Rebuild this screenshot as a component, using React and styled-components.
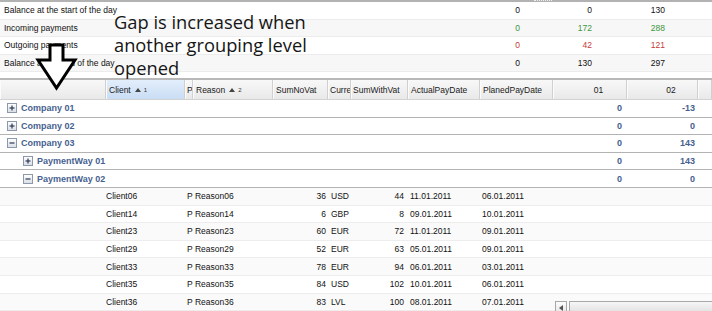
import React from "react"
import styled, { createGlobalStyle } from "styled-components"

const Global = createGlobalStyle`
body{
  margin:0;
  background:#fff;
  font-family:"Liberation Sans", Arial, sans-serif;
}
`

const COLS = "106px 79px 8px 80px 55px 23px 57px 72px 73px 74px 71px 1fr"

const Page = styled.div`
position:relative;
width:712px;
height:311px;
overflow:hidden;
background:#fff;
`

const Summary = styled.div`
height:76px;
border-top:2px solid #b2b2b2;
border-bottom:2px solid #b8b8b8;
`

const SplitHandle = styled.div`
position:absolute;
left:534px;
top:0;
width:18px;
height:2px;
border-top:1px dotted #eee;
`

const SummaryRow = styled.div`
display:grid;
grid-template-columns:1fr 72px 72px 73px 47px;
align-items:center;
height:17.6px;
border-bottom:1px solid #ececec;
box-sizing:border-box;
background:${({ $alt }) => ($alt ? "#f7f7f7" : "#fff")};
font-size:8.5px;
color:#111;
`

const SumLabel = styled.span`
padding-left:4px;
white-space:nowrap;
`

const SumValue = styled.span`
text-align:right;
color:${({ $tone }) => ($tone === "in" ? "#3d963d" : $tone === "out" ? "#c73a3a" : "#111")};
`

const GridPanel = styled.div`
position:relative;
`

const HeaderRow = styled.div`
display:grid;
grid-template-columns:${COLS};
height:20px;
background:linear-gradient(#f8f8f8, #e9e9e9);
border-bottom:1px solid #d2d2d2;
box-sizing:border-box;
font-size:8.5px;
color:#1a1a1a;
`

const HeaderCell = styled.div`
display:flex;
align-items:center;
gap:4px;
justify-content:${({ $center }) => ($center ? "center" : "flex-start")};
padding-left:${({ $center, $tight }) => ($center ? "18px" : $tight ? "2px" : "3px")};
border-right:1px solid #d0d0d0;
box-shadow:inset 1px 0 #fbfbfb;
overflow:hidden;
white-space:nowrap;
background:${({ $sorted }) => ($sorted ? "linear-gradient(#e3eefb, #c9ddf4)" : "transparent")};
`

const SortMark = styled.span`
display:inline-flex;
align-items:center;
gap:3px;
font-size:6px;
color:#333;
`

const GroupRow = styled.div`
display:grid;
grid-template-columns:${COLS};
align-items:center;
height:17.6px;
box-sizing:border-box;
border-bottom:1px solid #b3b3b3;
background:#fff;
font-size:9px;
font-weight:bold;
color:#46618f;
`

const GroupTitle = styled.div`
grid-column:1 / 10;
display:flex;
align-items:center;
gap:4px;
padding-left:${({ $level }) => 7 + $level * 16}px;
white-space:nowrap;
`

const GroupValue = styled.span`
text-align:right;
padding-right:${({ $pad }) => $pad}px;
`

const Nested = styled.div`
box-shadow:inset 1px 0 #a9a9a9;
`

const DataRow = styled.div`
display:grid;
grid-template-columns:${COLS};
align-items:center;
height:17.6px;
box-sizing:border-box;
border-bottom:1px solid #ededed;
background:${({ $alt }) => ($alt ? "#fafafa" : "#fff")};
font-size:8.5px;
color:#111;
`

const Cell = styled.span`
grid-column:${({ $col }) => $col};
text-align:${({ $right }) => ($right ? "right" : "left")};
padding-left:${({ $pl }) => $pl || 0}px;
padding-right:${({ $pr }) => $pr || 0}px;
white-space:nowrap;
`

const HScroll = styled.div`
position:absolute;
left:555px;
top:221px;
right:0;
height:12px;
display:flex;
`

const ScrollButton = styled.div`
width:10px;
height:11px;
border:1px solid #a8a8a8;
background:linear-gradient(#fdfdfd, #e4e4e4);
display:flex;
align-items:center;
justify-content:center;
`

const ScrollTrack = styled.div`
flex:1;
margin-left:2px;
border:1px solid #a8a8a8;
border-right:none;
background:linear-gradient(#f6f6f6, #e2e2e2);
`

const Note = styled.div`
position:absolute;
left:114px;
top:10px;
font-family:"Open Sans", sans-serif;
font-size:18.3px;
line-height:23px;
color:#151515;
white-space:pre;
`

const ArrowWrap = styled.svg`
position:absolute;
left:34px;
top:42px;
`

function Toggle({ open }) {
  return (
    <svg width="10" height="10" viewBox="0 0 10 10">
      <defs>
        <linearGradient id="tg" x1="0" y1="0" x2="0" y2="1">
          <stop offset="0" stopColor="#ffffff" />
          <stop offset="1" stopColor="#d9dee6" />
        </linearGradient>
      </defs>
      <rect x="0.5" y="0.5" width="9" height="9" fill="url(#tg)" stroke="#8d99ab" />
      <line x1="2.5" y1="5" x2="7.5" y2="5" stroke="#2b3a55" strokeWidth="1.2" />
      {!open && <line x1="5" y1="2.5" x2="5" y2="7.5" stroke="#2b3a55" strokeWidth="1.2" />}
    </svg>
  )
}

function Sort({ n }) {
  return (
    <SortMark>
      <svg width="6" height="4" viewBox="0 0 6 4">
        <path d="M0 4 L3 0 L6 4 Z" fill="#444" />
      </svg>
      {n}
    </SortMark>
  )
}

const summary = [
  { label: "Balance at the start of the day", v: ["0", "0", "130"] },
  { label: "Incoming payments", v: ["0", "172", "288"], tone: "in" },
  { label: "Outgoing payments", v: ["0", "42", "121"], tone: "out" },
  { label: "Balance at the end of the day", v: ["0", "130", "297"] },
]

const companies = [
  { name: "Company 01", a: "0", b: "-13", open: false },
  { name: "Company 02", a: "0", b: "0", open: false },
  { name: "Company 03", a: "0", b: "143", open: true },
]

const rows = [
  ["Client06", "P Reason06", "36", "USD", "44", "11.01.2011", "06.01.2011"],
  ["Client14", "P Reason14", "6", "GBP", "8", "09.01.2011", "10.01.2011"],
  ["Client23", "P Reason23", "60", "EUR", "72", "11.01.2011", "09.01.2011"],
  ["Client29", "P Reason29", "52", "EUR", "63", "05.01.2011", "09.01.2011"],
  ["Client33", "P Reason33", "78", "EUR", "94", "06.01.2011", "03.01.2011"],
  ["Client35", "P Reason35", "84", "USD", "102", "10.01.2011", "06.01.2011"],
  ["Client36", "P Reason36", "83", "LVL", "100", "08.01.2011", "07.01.2011"],
]

function Group({ name, a, b, open, level }) {
  return (
    <GroupRow>
      <GroupTitle $level={level}>
        <Toggle open={open} />
        {name}
      </GroupTitle>
      <GroupValue $pad={5}>{a}</GroupValue>
      <GroupValue $pad={3}>{b}</GroupValue>
    </GroupRow>
  )
}

export default function App() {
  return (
    <Page>
      <Global />
      <SplitHandle />
      <Summary>
        {summary.map((r, i) => (
          <SummaryRow key={r.label} $alt={i % 2 === 1}>
            <SumLabel>{r.label}</SumLabel>
            {r.v.map((v, j) => (
              <SumValue key={j} $tone={r.tone}>{v}</SumValue>
            ))}
            <span />
          </SummaryRow>
        ))}
      </Summary>
      <GridPanel>
        <HeaderRow>
          <HeaderCell />
          <HeaderCell $sorted>Client <Sort n="1" /></HeaderCell>
          <HeaderCell $tight>P</HeaderCell>
          <HeaderCell>Reason <Sort n="2" /></HeaderCell>
          <HeaderCell>SumNoVat</HeaderCell>
          <HeaderCell $tight>Curre</HeaderCell>
          <HeaderCell $tight>SumWithVat</HeaderCell>
          <HeaderCell>ActualPayDate</HeaderCell>
          <HeaderCell>PlanedPayDate</HeaderCell>
          <HeaderCell $center>01</HeaderCell>
          <HeaderCell $center>02</HeaderCell>
          <HeaderCell />
        </HeaderRow>
        {companies.map((c) => (
          <Group key={c.name} {...c} level={0} />
        ))}
        <Nested>
          <Group name="PaymentWay 01" a="0" b="143" open={false} level={1} />
          <Group name="PaymentWay 02" a="0" b="0" open level={1} />
          {rows.map((r, i) => (
            <DataRow key={r[0]} $alt={i % 2 === 0}>
              <Cell $col="2">{r[0]}</Cell>
              <Cell $col="3 / 5" $pl={2}>{r[1]}</Cell>
              <Cell $col="5" $right $pr={2}>{r[2]}</Cell>
              <Cell $col="6" $pl={3}>{r[3]}</Cell>
              <Cell $col="7" $right $pr={4}>{r[4]}</Cell>
              <Cell $col="8" $pl={2}>{r[5]}</Cell>
              <Cell $col="9" $pl={2}>{r[6]}</Cell>
            </DataRow>
          ))}
        </Nested>
        <HScroll>
          <ScrollButton>
            <svg width="4" height="6" viewBox="0 0 4 6">
              <path d="M4 0 L0 3 L4 6 Z" fill="#555" />
            </svg>
          </ScrollButton>
          <ScrollTrack />
        </HScroll>
      </GridPanel>
      <Note>{"Gap is increased when\nanother grouping level\nopened"}</Note>
      <ArrowWrap width="46" height="50" viewBox="0 0 46 50">
        <path
          d="M16 3 L29 3 L29 18 L41 18 L22.5 46 L4 18 L16 18 Z"
          fill="#fff"
          stroke="#000"
          strokeWidth="3"
          strokeLinejoin="miter"
        />
      </ArrowWrap>
    </Page>
  )
}
